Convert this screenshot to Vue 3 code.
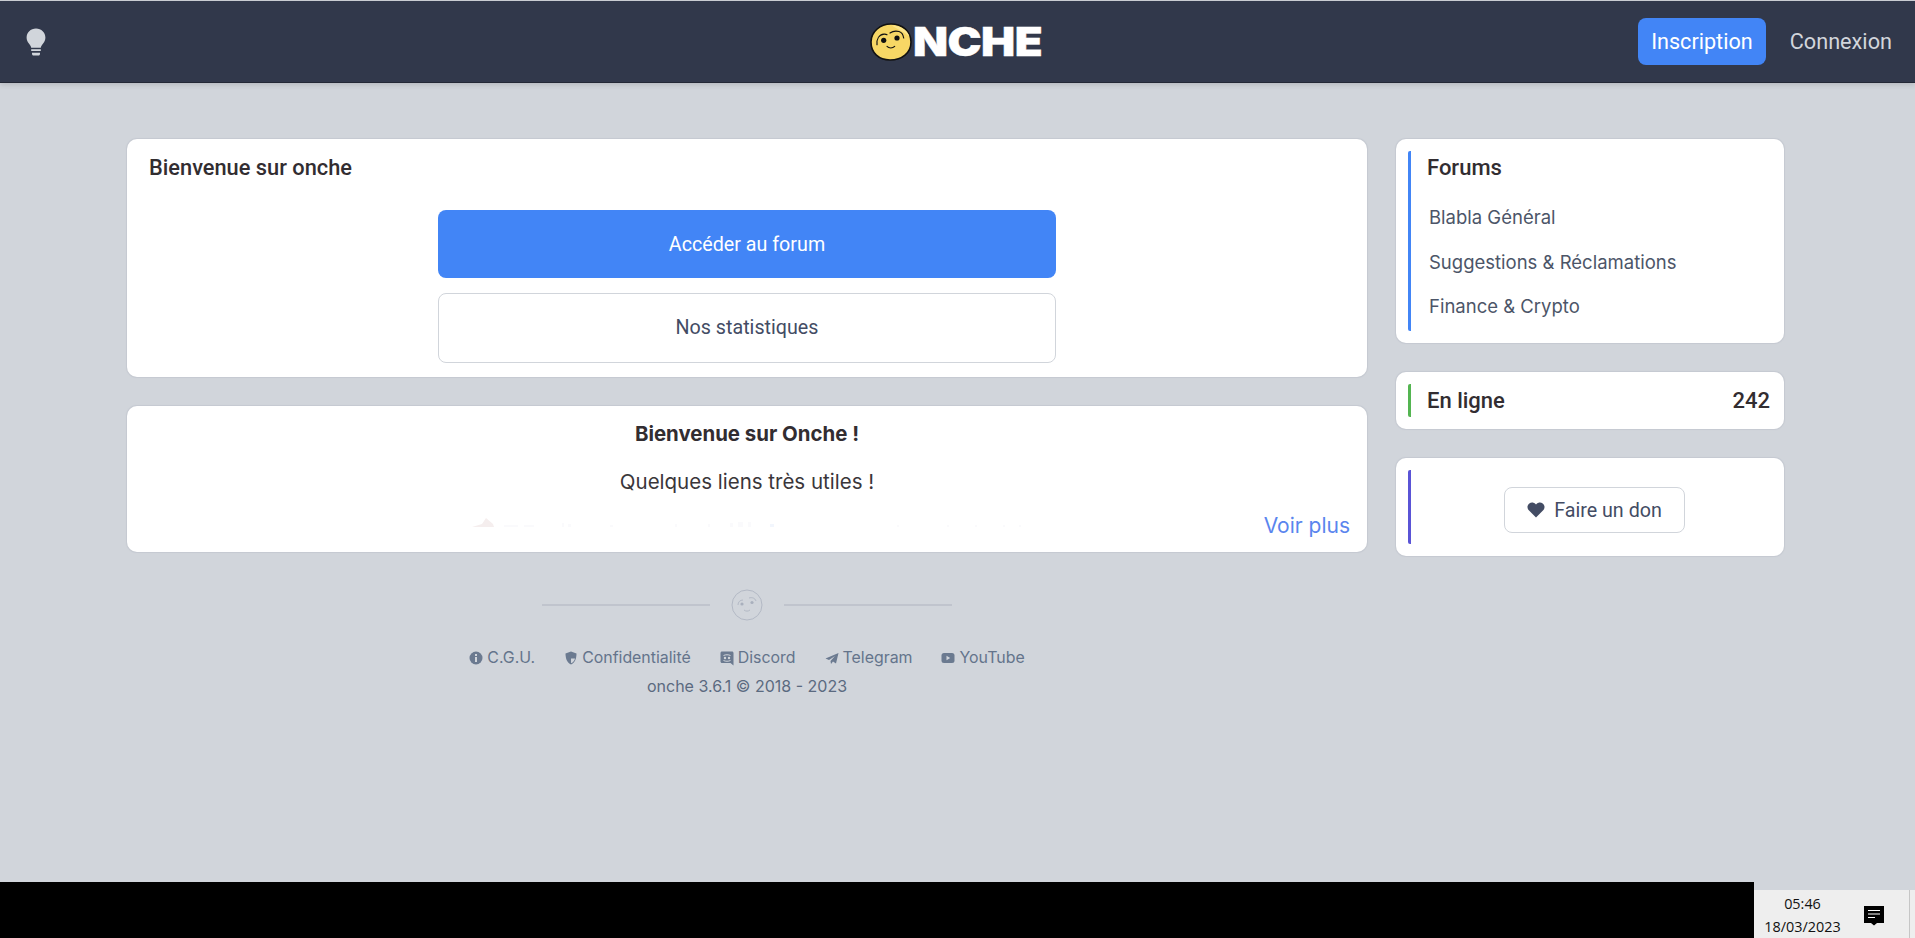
<script setup>
const forums = ['Blabla Général', 'Suggestions & Réclamations', 'Finance & Crypto']
</script>

<template>
  <div class="page">
    <header class="nav">
      <div class="nav-left">
        <svg class="bulb" viewBox="0 0 20 28" width="20" height="28">
          <path d="M10 0.5C4.6 0.5 0.6 4.5 0.6 9.6c0 2.5 0.9 4.4 2.3 6 1 1.2 2 2.6 2.3 4.2h9.6c0.3-1.6 1.3-3 2.3-4.2 1.4-1.6 2.3-3.5 2.3-6C19.400 4.500 15.400 0.500 10 0.500z" fill="#d1d5db"/>
          <rect x="5.200" y="21.200" width="9.600" height="1.800" fill="#d1d5db"/>
          <path d="M6 24.700h8v1.300c0 .8-.7 1.500-1.500 1.500h-5c-.8 0-1.500-.7-1.500-1.500z" fill="#d1d5db"/>
        </svg>
      </div>
      <div class="logo">
        <svg class="face" viewBox="0 0 42 38" width="42" height="38">
          <path d="M21 1C32 1 41 8 41 19c0 11-9 18-21 18C9 37 1 30 1 19 1 9 10 1 21 1z" fill="#f7d765" stroke="#111" stroke-width="1.600"/>
          <path d="M22 2.500c8 0 15 4 17.500 11-6-5-13.500-8-17.500-11z" fill="#fbe58d"/>
          <circle cx="13.700" cy="17.300" r="2.600" fill="#111"/>
          <circle cx="27" cy="15" r="2.600" fill="#111"/>
          <path d="M7 21.700C6.500 16 9 11.700 14 11.200c1.200-.1 2.200 0 3 .5M20 10c2.800-2 6-2.300 9-1.500 2.500.7 4.200 3.300 4.700 6.500" fill="none" stroke="#111" stroke-width="1.200" stroke-linecap="round"/>
          <path d="M17 23.300c2 2.200 5.500 2.200 7.700 0" fill="none" stroke="#111" stroke-width="1.100" stroke-linecap="round"/>
        </svg>
        <span class="logo-text">NCHE</span>
      </div>
      <div class="nav-right">
        <a class="signup">Inscription</a>
        <a class="login">Connexion</a>
      </div>
    </header>

    <main class="main">
      <div class="left">
        <section class="card welcome">
          <h2 class="welcome-title">Bienvenue sur onche</h2>
          <div class="actions">
            <a class="action primary">Accéder au forum</a>
            <a class="action outline">Nos statistiques</a>
          </div>
        </section>

        <section class="card post">
          <p class="post-title">Bienvenue sur Onche !</p>
          <p class="post-sub">Quelques liens très utiles !</p>
          <div class="post-fade">
            <svg viewBox="0 0 560 10" width="560" height="10">
              <path d="M0 9 L10 6 L14 0 L21 6 L22 9z" fill="#f5eeee"/>
              <g fill="#fafafc">
                <rect x="32" y="7" width="14" height="2"/><rect x="52" y="7" width="10" height="2"/>
                <rect x="90" y="5" width="2" height="4"/><rect x="96" y="6" width="3" height="3"/>
                <rect x="138" y="7" width="3" height="2"/><rect x="203" y="6" width="2" height="3"/>
                <rect x="236" y="6" width="2" height="3"/><rect x="258" y="5" width="3" height="4"/>
                <rect x="266" y="4" width="5" height="5"/><rect x="276" y="4" width="3" height="5"/>
                <rect x="425" y="7" width="2" height="2"/><rect x="475" y="7" width="2" height="2"/>
                <rect x="503" y="7" width="2" height="2"/><rect x="531" y="7" width="2" height="2"/>
                <rect x="547" y="7" width="2" height="2"/>
              </g>
              <rect x="298" y="6" width="4" height="3" fill="#f2f6fd"/>
            </svg>
          </div>
          <a class="more">Voir plus</a>
        </section>

        <footer class="foot">
          <div class="divider">
            <span class="rule"></span>
            <svg viewBox="0 0 32 32" width="32" height="32">
              <circle cx="16" cy="16" r="15" fill="none" stroke="#b3b9c5" stroke-width="1"/>
              <circle cx="11" cy="15" r="1.600" fill="#a9b0bd"/>
              <circle cx="21" cy="13.500" r="1.600" fill="#a9b0bd"/>
              <path d="M7 16c0-3 2-5 5-5M18 9c3-1 6 0 7 3M13 21c2 1.500 4 1.500 6 0" fill="none" stroke="#b3b9c5" stroke-width="1"/>
            </svg>
            <span class="rule"></span>
          </div>
          <nav class="links">
            <a class="link">
              <svg viewBox="0 0 14 14" width="14" height="14"><circle cx="7" cy="7" r="6.500" fill="#6b7a90"/><rect x="6" y="6" width="2" height="5" fill="#d1d5db"/><rect x="6" y="3" width="2" height="2" fill="#d1d5db"/></svg>
              C.G.U.
            </a>
            <a class="link">
              <svg viewBox="0 0 14 14" width="14" height="14"><path d="M7 .5l5.500 2c0 5-1.500 9-5.500 11-4-2-5.500-6-5.500-11z" fill="#6b7a90"/><path d="M7 2.200v5.300h4c-.4 2.200-1.700 3.800-4 4.800z" fill="#d1d5db"/></svg>
              Confidentialité
            </a>
            <a class="link">
              <svg viewBox="0 0 14 15" width="14" height="15"><path d="M2 .5h10c.9 0 1.500.7 1.500 1.500v12.500l-3-2.500H2c-.8 0-1.500-.7-1.500-1.500V2C.5 1.200 1.200.5 2 .5z" fill="#6b7a90"/><circle cx="5" cy="7" r="1.200" fill="#d1d5db"/><circle cx="9" cy="7" r="1.200" fill="#d1d5db"/><path d="M3.500 4.500c2-1 5-1 7 0M3.500 9.500c2 1 5 1 7 0" stroke="#d1d5db" fill="none"/></svg>
              Discord
            </a>
            <a class="link">
              <svg viewBox="0 0 14 14" width="14" height="14"><path d="M13.500 2L.5 7.500l3.500 1.500 6-4-4.500 5 .5 3 2-2.500 3 2z" fill="#6b7a90"/></svg>
              Telegram
            </a>
            <a class="link">
              <svg viewBox="0 0 14 12" width="14" height="12"><rect x=".5" y="1" width="13" height="10" rx="2.500" fill="#6b7a90"/><path d="M5.500 3.800v4.400L9.200 6z" fill="#d1d5db"/></svg>
              YouTube
            </a>
          </nav>
          <p class="copy">onche 3.6.1 © 2018 - 2023</p>
        </footer>
      </div>

      <aside class="right">
        <section class="card side">
          <div class="accent blue forums">
            <h3 class="side-title">Forums</h3>
            <a v-for="f in forums" :key="f" class="forum">{{ f }}</a>
          </div>
        </section>
        <section class="card side">
          <div class="accent green online">
            <span class="side-title">En ligne</span>
            <span class="side-title count">242</span>
          </div>
        </section>
        <section class="card side">
          <div class="accent indigo donate">
            <a class="don">
              <svg viewBox="0 0 18 16" width="18" height="16"><path d="M9 15.500L1.800 8.300C-.2 6.300.1 3 2.300 1.400 4.200 0 6.900.3 8.500 2L9 2.500l.5-.5c1.600-1.700 4.300-2 6.200-.6 2.200 1.600 2.500 4.900.5 6.900z" fill="#434c64"/></svg>
              Faire un don
            </a>
          </div>
        </section>
      </aside>
    </main>

    <div class="taskbar">
      <div class="task-black"></div>
      <div class="tray">
        <div class="clock"><span>05:46</span><span>18/03/2023</span></div>
        <svg class="notif" viewBox="0 0 20 20" width="20" height="20">
          <path d="M0 0h20v17h-7l-3 2.500L7 17H0z" fill="#000"/>
          <path d="M4 4.500h12M4 8h12M4 11.500h7" stroke="#fff" stroke-width="1"/>
        </svg>
        <span class="tray-end"></span>
      </div>
    </div>
  </div>
</template>

<style>
html, body { margin: 0; }
</style>

<style scoped>
.page {
  height: 938px;
  display: flex;
  flex-direction: column;
  overflow: hidden;
  background: #d1d5db;
  border-top: 1px solid #c9ccd2;
  box-sizing: border-box;
  font-family: Inter, "Liberation Sans", sans-serif;
}
.nav {
  flex: none;
  height: 82px;
  box-sizing: border-box;
  display: flex;
  align-items: center;
  justify-content: space-between;
  background: #31384b;
  border-bottom: 1px solid #232836;
  box-shadow: 0 2px 5px rgba(60, 60, 70, .18);
  padding: 0 23px 0 26px;
  position: relative;
}
.nav-left { display: flex; align-items: center; }
.bulb { display: block; }
.logo {
  position: absolute;
  left: 870px;
  top: 22px;
  display: flex;
  align-items: center;
}
.face { display: block; }
.logo-text {
  font-family: Inter, sans-serif;
  font-weight: 900;
  font-size: 40px;
  line-height: 38px;
  color: #fff;
  letter-spacing: -.5px;
  margin-left: 1px;
  transform: scaleX(1.14);
  transform-origin: left center;
  -webkit-text-stroke: .4px #fff;
}
.nav-right { display: flex; align-items: center; gap: 24px; }
.signup {
  font-family: Roboto, sans-serif;
  font-size: 21.600px;
  line-height: 47px;
  height: 47px;
  padding: 0 13px;
  background: #4285f6;
  color: #fff;
  border-radius: 8px;
}
.login {
  font-family: Roboto, sans-serif;
  font-size: 21.700px;
  color: #d1d5db;
}
.main {
  flex: 1;
  min-height: 0;
  display: flex;
  align-items: flex-start;
  gap: 29px;
  padding: 56px 0 0 127px;
}
.left { width: 1240px; display: flex; flex-direction: column; gap: 29px; }
.right { width: 388px; display: flex; flex-direction: column; gap: 29px; }
.card {
  background: #fff;
  border-radius: 10px;
  box-shadow: 0 0 1px 1px #c5c9d1;
  box-sizing: border-box;
}
.welcome { height: 238px; padding: 15px 22px; }
.welcome-title {
  margin: 0;
  font-family: Roboto, sans-serif;
  font-weight: 500;
  font-size: 21.800px;
  line-height: 28px;
  color: #322d31;
}
.actions {
  width: 618px;
  margin: 28px 0 0 289px;
  display: flex;
  flex-direction: column;
  gap: 15px;
}
.action {
  display: block;
  box-sizing: border-box;
  text-align: center;
  font-family: Roboto, sans-serif;
  font-size: 19.700px;
  border-radius: 8px;
}
.primary { height: 68px; line-height: 69px; background: #4285f6; color: #fff; }
.outline { height: 70px; line-height: 68px; border: 1px solid #d1d5db; color: #434c64; }
.post {
  height: 146px;
  position: relative;
  overflow: hidden;
  text-align: center;
  padding-top: 15px;
}
.post-title {
  margin: 0;
  font-family: Inter, sans-serif;
  font-weight: 700;
  font-size: 20.400px;
  line-height: 26px;
  color: #322d31;
}
.post-sub {
  margin: 22px 0 0;
  font-size: 20.500px;
  line-height: 26px;
  color: #3a363a;
}
.post-fade {
  position: absolute;
  left: 345px;
  top: 112px;
  line-height: 0;
}
.more {
  position: absolute;
  right: 17px;
  bottom: 13px;
  font-size: 21px;
  line-height: 26px;
  color: #5a85ee;
}
.foot { display: flex; flex-direction: column; align-items: center; }
.divider {
  display: flex;
  align-items: center;
  gap: 21px;
  margin-top: 8px;
}
.rule { width: 168px; height: 2px; background: #c0c4cd; }
.links {
  display: flex;
  gap: 29px;
  margin-top: 25px;
  font-size: 15.900px;
  line-height: 24px;
  color: #64748b;
}
.link { display: flex; align-items: center; gap: 4px; }
.copy {
  margin: 5px 0 0;
  font-size: 16px;
  line-height: 22px;
  color: #5b6a80;
}
.side { padding: 12px; }
.accent { border-left: 3px solid; padding-left: 16px; border-radius: 2px; }
.blue { border-color: #4285f6; }
.green { border-color: #54b551; }
.indigo { border-color: #5a54d6; }
.side-title {
  margin: 0;
  font-family: Roboto, sans-serif;
  font-weight: 500;
  font-size: 22px;
  line-height: 28px;
  color: #322d31;
}
.count { margin-right: 2px; }
.forums { height: 180px; }
.forums .side-title { padding: 3px 0 13px; }
.forum {
  display: block;
  margin-left: 2px;
  font-size: 18.500px;
  line-height: 44.500px;
  color: #4c5568;
}
.online {
  height: 33px;
  display: flex;
  align-items: center;
  justify-content: space-between;
}
.donate {
  height: 74px;
  display: flex;
  align-items: center;
  justify-content: center;
  box-sizing: border-box;
  padding-top: 6px;
  padding-right: 11px;
}
.don {
  box-sizing: border-box;
  width: 181px;
  height: 46px;
  border: 1px solid #d1d5db;
  border-radius: 8px;
  display: flex;
  align-items: center;
  justify-content: center;
  gap: 9px;
  padding-left: 1px;
  font-family: Roboto, sans-serif;
  font-size: 19.700px;
  color: #434c64;
}
.taskbar {
  flex: none;
  height: 56px;
  display: flex;
  align-items: flex-end;
}
.task-black { width: 1754px; height: 56px; background: #000; }
.tray {
  flex: 1;
  height: 48px;
  background: #eeeeee;
  display: flex;
  align-items: center;
  font-family: "Open Sans", "Liberation Sans", sans-serif;
  color: #111;
}
.clock {
  width: 97px;
  display: flex;
  flex-direction: column;
  align-items: center;
  font-size: 14.400px;
  line-height: 23px;
  padding-top: 2px;
}
.notif { margin-left: 13px; margin-top: 4px; }
.tray-end {
  margin-left: auto;
  margin-right: 5px;
  width: 1px;
  height: 48px;
  background: #c6c6c6;
}
</style>
